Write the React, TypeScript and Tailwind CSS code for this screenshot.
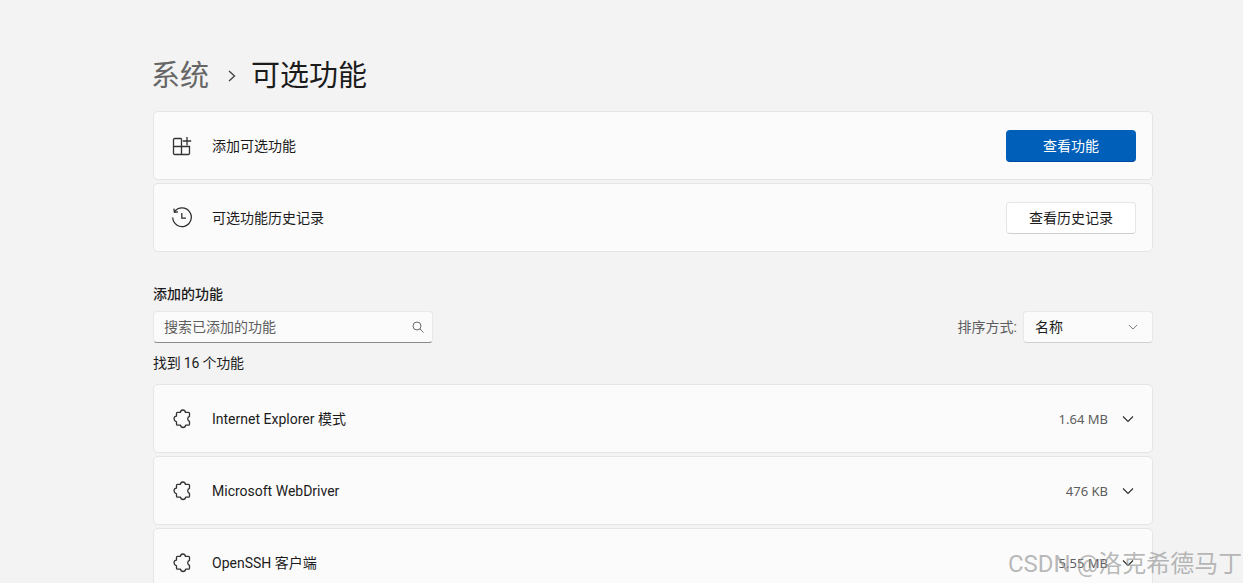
import type { ReactNode } from "react";

const font = "font-['Roboto','Noto_Sans_CJK_SC',sans-serif]";

function AddAppsIcon() {
  return (
    <svg width="20" height="20" viewBox="0 0 20 20" fill="none" stroke="#333" strokeWidth="1.3">
      <path d="M9.500 2.500H2.700a1.200 1.200 0 0 0-1.200 1.200v13.600a1.200 1.200 0 0 0 1.200 1.200h13.600a1.200 1.200 0 0 0 1.200-1.200V10.500H1.500M9.500 2.500v16" />
      <path d="M15 1v8.500M10.800 5h8.400" />
    </svg>
  );
}

function HistoryIcon() {
  return (
    <svg width="22" height="22" viewBox="0 0 22 22" fill="none" stroke="#2b2b2b" strokeWidth="1.25">
      <path d="M3.600 4.600A9.300 9.300 0 1 1 1.700 10.600" />
      <path d="M2.900 1.600l.5 3.600 3.600-.4" />
      <path d="M10.800 6v5.200h4.200" />
    </svg>
  );
}

function PuzzleIcon() {
  return (
    <svg width="20" height="20" viewBox="-1 0 20 20" fill="none" stroke="#333" strokeWidth="1.3" strokeLinejoin="round">
      <path d="M7.400 3.300c.2-1.300 1.200-2.300 2.500-2.300s2.300 1 2.500 2.300h3.100c.6 0 1 .4 1 1v3c-1.100.3-1.800 1.300-1.800 2.500s.7 2.200 1.800 2.500v2.900c0 .6-.4 1-1 1h-2.800c-.2 1.400-1.300 2.300-2.600 2.300s-2.400-.9-2.600-2.300H4.500c-.6 0-1-.4-1-1v-2.400C2 12.100 1 11 1 9.700s1-2.400 2.500-2.600V4.300c0-.6.4-1 1-1h2.900z" />
    </svg>
  );
}

function Chevron({ color = "#2b2b2b", size = 12 }: { color?: string; size?: number }) {
  return (
    <svg width={size} height={size} viewBox="0 0 12 12" fill="none" stroke={color} strokeWidth="1.1">
      <path d="M1 3.500l5 5 5-5" />
    </svg>
  );
}

function Card({ icon, label, children }: { icon: ReactNode; label: string; children: ReactNode }) {
  return (
    <div className="flex h-[69px] items-center rounded-[5px] border border-[#e5e5e5] bg-[#fbfbfb] pl-[17px] pr-[16px]">
      <div className="flex w-[22px] justify-center">{icon}</div>
      <span className="ml-[19px] flex-1 pt-[1px] text-[14px] text-[#1b1b1b]">{label}</span>
      {children}
    </div>
  );
}

function FeatureRow({ name, size }: { name: string; size: string }) {
  return (
    <Card icon={<PuzzleIcon />} label={name}>
      <span className="pt-[2px] font-['Noto_Sans',sans-serif] text-[13px] text-[#5d5d5d]">{size}</span>
      <span className="ml-[14px] mr-[2px] flex w-[12px] justify-center">
        <Chevron />
      </span>
    </Card>
  );
}

export default function App() {
  return (
    <div className={`relative h-[583px] w-[1243px] overflow-hidden bg-[#f3f3f3] ${font}`}>
      <div className="ml-[153px] w-[1000px] pt-[54px]">
        <div className="-ml-[2px] flex h-[42px] items-center pt-[2px] text-[29px] leading-[42px]">
          <span className="text-[#666666]">系统</span>
          <svg className="ml-[18px] mr-[14px]" width="10" height="14" viewBox="0 0 10 14" fill="none" stroke="#444" strokeWidth="1.4">
            <path d="M2 2l5.500 5-5.500 5" />
          </svg>
          <span className="text-[#1b1b1b]">可选功能</span>
        </div>

        <div className="mt-[15px] flex flex-col gap-[3px]">
          <Card icon={<AddAppsIcon />} label="添加可选功能">
            <button className="h-[32px] w-[130px] rounded-[4px] border-b border-[#0049a0] bg-[#005fb8] pt-[2px] text-[14px] text-white">
              查看功能
            </button>
          </Card>
          <Card icon={<HistoryIcon />} label="可选功能历史记录">
            <button className="h-[32px] w-[130px] rounded-[4px] border border-[#e6e6e6] border-b-[#cfcfcf] bg-white pt-[1px] text-[14px] text-[#1b1b1b]">
              查看历史记录
            </button>
          </Card>
        </div>

        <div className="mt-[32px] text-[14px] font-medium leading-[20px] text-[#1b1b1b]">添加的功能</div>

        <div className="mt-[7px] flex items-center justify-between">
          <div className="flex h-[32px] w-[280px] items-center justify-between rounded-[4px] border border-[#e8e8e8] border-b-[#8a8a8a] bg-[#fbfbfb] pl-[10px] pr-[8px]">
            <span className="text-[14px] text-[#5d5d5d]">搜索已添加的功能</span>
            <svg width="12" height="12" viewBox="0 0 12 12" fill="none" stroke="#6b6b6b" strokeWidth="1">
              <circle cx="5" cy="5" r="4" />
              <path d="M8 8l3.500 3.500" />
            </svg>
          </div>
          <div className="flex items-center">
            <span className="text-[14px] text-[#5d5d5d]">排序方式:</span>
            <div className="ml-[6px] flex h-[32px] w-[130px] items-center justify-between rounded-[4px] border border-[#e8e8e8] border-b-[#cfcfcf] bg-[#fbfbfb] pl-[11px] pr-[14px]">
              <span className="text-[14px] text-[#1b1b1b]">名称</span>
              <Chevron color="#6b6b6b" size={10} />
            </div>
          </div>
        </div>

        <div className="mt-[10px] text-[14px] leading-[20px] tracking-[-0.2px] text-[#1b1b1b]">找到 16 个功能</div>

        <div className="mt-[11px] flex flex-col gap-[3px]">
          <FeatureRow name="Internet Explorer 模式" size="1.64 MB" />
          <FeatureRow name="Microsoft WebDriver" size="476 KB" />
          <FeatureRow name="OpenSSH 客户端" size="5.55 MB" />
        </div>
      </div>

      <span className="absolute left-[1008px] top-[550px] whitespace-nowrap text-[24px] leading-[28px] text-[#9a9a9a]/70">
        CSDN @洛克希德马丁
      </span>
    </div>
  );
}
